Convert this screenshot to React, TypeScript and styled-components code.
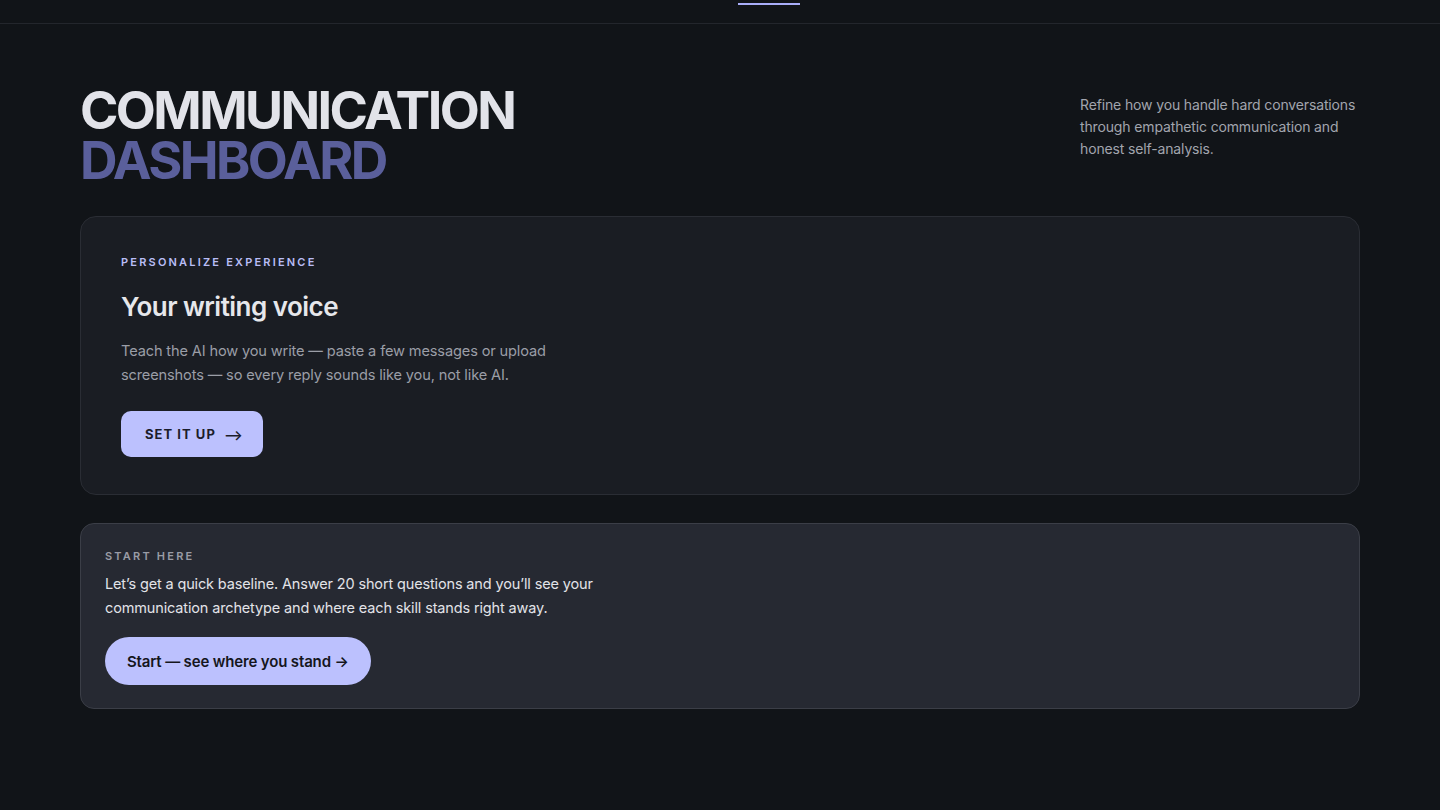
import { FC } from 'react';
import styled, { createGlobalStyle } from 'styled-components';

const GlobalStyle = createGlobalStyle`
  * { box-sizing: border-box; }
  html, body {
    margin: 0;
    background: #111418;
    color: #e2e3e8;
    font-family: Inter, "Noto Sans", sans-serif;
  }
`;

const App: FC = () => {
  return (
    <>
      <GlobalStyle />
      <TopBar>
        <TabIndicator />
      </TopBar>
      <Main>
        <Hero>
          <Title>
            <TitleLine>COMMUNICATION</TitleLine>
            <TitleLine accent>DASHBOARD</TitleLine>
          </Title>
          <Intro>
            Refine how you handle hard conversations through empathetic
            communication and honest self-analysis.
          </Intro>
        </Hero>

        <VoiceCard>
          <Eyebrow tone="#b9bdf6">Personalize experience</Eyebrow>
          <CardTitle>Your writing voice</CardTitle>
          <VoiceText>
            Teach the AI how you write — paste a few messages or upload
            screenshots — so every reply sounds like you, not like AI.
          </VoiceText>
          <SetupButton type="button">
            Set it up <Arrow>⟶</Arrow>
          </SetupButton>
        </VoiceCard>

        <StartCard>
          <Eyebrow tone="#9a9ca6">Start here</Eyebrow>
          <StartText>
            Let’s get a quick baseline. Answer 20 short questions and you’ll
            see your communication archetype and where each skill stands right
            away.
          </StartText>
          <StartButton type="button">Start — see where you stand →</StartButton>
        </StartCard>
      </Main>
    </>
  );
};

export default App;

const TopBar = styled.header`
  height: 24px;
  border-bottom: 1px solid #23262c;
  display: flex;
  justify-content: center;
`;

const TabIndicator = styled.span`
  display: block;
  width: 62px;
  height: 2px;
  margin-top: 3px;
  margin-left: 98px;
  background: #a9aef8;
`;

const Main = styled.main`
  max-width: 1440px;
  padding: 62px 80px 100px;
  display: flex;
  flex-direction: column;
`;

const Hero = styled.section`
  display: flex;
  justify-content: space-between;
  align-items: flex-start;
  margin-bottom: 30px;
`;

const Title = styled.h1`
  margin: 0;
  font-size: 52px;
  line-height: 50px;
  font-weight: 700;
  letter-spacing: -0.05em;
`;

const TitleLine = styled.span<{ accent?: boolean }>`
  display: block;
  color: ${(p) => (p.accent ? '#5a5f9b' : '#e2e3e9')};
`;

const Intro = styled.p`
  margin: 8px 0 0;
  width: 280px;
  font-size: 14px;
  line-height: 22px;
  color: #a2a5ae;
  letter-spacing: -0.01em;
`;

const VoiceCard = styled.section`
  background: #1a1d23;
  border: 1px solid #2a2d34;
  border-radius: 16px;
  padding: 38px 40px 37px;
  margin-bottom: 28px;
`;

const StartCard = styled.section`
  background: #262932;
  border: 1px solid #3b3e47;
  border-radius: 14px;
  padding: 25px 24px 23px;
  display: flex;
  flex-direction: column;
`;

const Eyebrow = styled.div<{ tone: string }>`
  font-size: 11px;
  line-height: 14px;
  font-weight: 600;
  letter-spacing: 0.2em;
  text-transform: uppercase;
  color: ${(p) => p.tone};
`;

const CardTitle = styled.h2`
  margin: 22px 0 0;
  font-size: 26px;
  line-height: 32px;
  font-weight: 600;
  letter-spacing: -0.02em;
  color: #e6e7eb;
`;

const VoiceText = styled.p`
  margin: 16px 0 0;
  max-width: 440px;
  font-size: 14.6px;
  line-height: 24px;
  color: #9b9ea7;
  letter-spacing: -0.01em;
`;

const SetupButton = styled.button`
  margin-top: 24px;
  height: 46px;
  padding: 0 20px 0 24px;
  border: none;
  border-radius: 10px;
  background: #bcc1fe;
  color: #1b1d2b;
  font-family: inherit;
  font-size: 13px;
  font-weight: 700;
  letter-spacing: 0.08em;
  text-transform: uppercase;
  cursor: pointer;
  display: inline-flex;
  align-items: center;
  gap: 8px;
`;

const Arrow = styled.span`
  font-size: 14px;
  font-weight: 600;
  letter-spacing: 0;
`;

const StartText = styled.p`
  margin: 9px 0 0;
  max-width: 500px;
  font-size: 14.5px;
  line-height: 24px;
  color: #e2e3e8;
  letter-spacing: -0.01em;
`;

const StartButton = styled.button`
  margin-top: 17px;
  align-self: flex-start;
  height: 48px;
  padding: 0 22px;
  border: none;
  border-radius: 999px;
  background: #bcc1fe;
  color: #15161c;
  font-family: inherit;
  font-size: 15px;
  font-weight: 600;
  letter-spacing: -0.01em;
  cursor: pointer;
`;
